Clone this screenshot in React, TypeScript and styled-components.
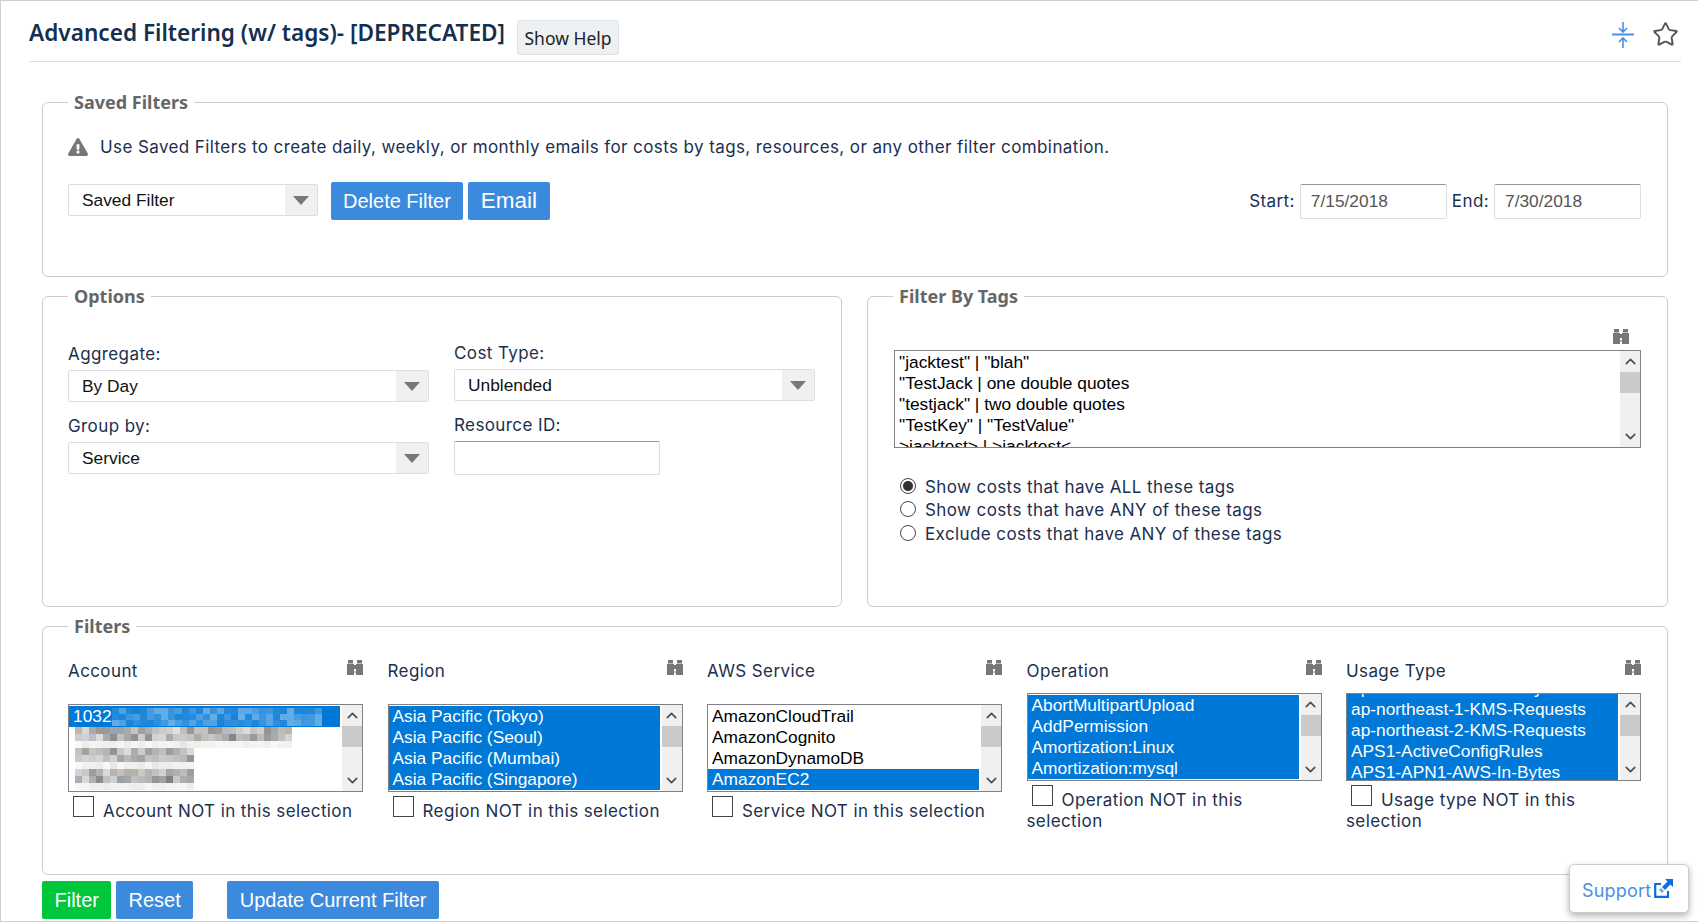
import * as React from 'react';
import styled, { createGlobalStyle } from 'styled-components';
import { FaExclamationTriangle } from 'react-icons/fa';
import { ChevronDown, ChevronUp, Star } from 'lucide-react';

const BODY_FONT = `Inter, "Noto Sans", sans-serif`;
const HEAD_FONT = `"Noto Sans", "Open Sans", sans-serif`;
const ARIAL = `"Liberation Sans", Arial, sans-serif`;

// deterministic noise for the blurred account names
const noise = (seed: number) => {
  let s = seed;
  return () => {
    s = (s * 16807) % 2147483647;
    return (s % 1000) / 1000;
  };
};

const BlurredSelected = () => {
  const rnd = noise(77);
  const cells = [];
  for (let y = 0; y < 3; y++) {
    for (let x = 0; x < 30; x++) {
      cells.push(
        <rect key={`${x}-${y}`} x={x * 7} y={y * 6} width={7} height={6} fill="#fff" opacity={0.08 + rnd() * 0.32} />
      );
    }
  }
  return (
    <svg width={210} height={18}>
      {cells}
    </svg>
  );
};

const BlurredRows = () => {
  const rnd = noise(1234);
  const greys = ['#7f7f7f', '#a5a5a0', '#b4b0a8', '#9aa0a8', '#c0bcb6', '#8c8c8c'];
  const lines = [31, 17, 17];
  const cells: React.ReactNode[] = [];
  lines.forEach((count, line) => {
    for (let row = 0; row < 3; row++) {
      for (let x = 0; x < count; x++) {
        const strength = row === 2 ? 0.08 + rnd() * 0.12 : 0.45 + rnd() * 0.55;
        cells.push(
          <rect
            key={`${line}-${row}-${x}`}
            x={x * 7}
            y={line * 21 + row * 7}
            width={7}
            height={7}
            fill={greys[Math.floor(rnd() * greys.length)]}
            opacity={strength}
          />
        );
      }
    }
  });
  return (
    <MosaicSvg width={225} height={63}>
      {cells}
    </MosaicSvg>
  );
};

const CompressIcon = () => (
  <svg width={22} height={28} viewBox="0 0 22 28" fill="none" stroke="#4a90e2" strokeWidth={1.6}>
    <path d="M11 1v10M7 7l4 4 4-4" />
    <path d="M0 13.5h22" strokeWidth={2} />
    <path d="M11 27V17M7 21l4-4 4 4" />
  </svg>
);

const BinocularsIcon = () => (
  <svg width={16} height={15} viewBox="0 0 16 15" fill="#777">
    <path d="M1 0h5v3.5H1zM10 0h5v3.5h-5zM0 4h7v11H0zM9 4h7v11H9z" />
    <path d="M7 5h2v4H7z" />
    <path d="M7 11h2v2H7z" opacity={0.5} />
  </svg>
);

const ExternalIcon = () => (
  <svg width={20} height={20} viewBox="0 0 20 20" fill="none">
    <path d="M7 6H1.2v12.8H14V13" stroke="#0f6be0" strokeWidth={2.2} />
    <path d="M11 1h8v8l-2.6-2.6-5.4 5.6-3-3 5.5-5.4z" fill="#0f6be0" />
    <path d="M5 12l2-2 3 3-2 2z" fill="#0f6be0" opacity={0.6} />
  </svg>
);

const Select = ({ value }: { value: string }) => (
  <SelectBox>
    <SelectValue>{value}</SelectValue>
    <SelectArrow>
      <Triangle />
    </SelectArrow>
  </SelectBox>
);

type ListProps = {
  rows?: string[];
  selected?: number[];
  scrolled?: boolean;
  tall?: boolean;
  children?: React.ReactNode;
};

const ListBox = ({ rows = [], selected = [], scrolled, tall, children }: ListProps) => (
  <ListFrame $tall={tall}>
    <ListRows $scrolled={scrolled}>
      {children}
      {rows.map((row, i) => (
        <ListRow key={row} $selected={selected.includes(i)}>
          {row}
        </ListRow>
      ))}
    </ListRows>
    <ScrollBar>
      <ScrollButton>
        <ChevronUp size={17} strokeWidth={2.4} />
      </ScrollButton>
      <ScrollThumb />
      <ScrollRest />
      <ScrollButton>
        <ChevronDown size={17} strokeWidth={2.4} />
      </ScrollButton>
    </ScrollBar>
  </ListFrame>
);

type ColumnProps = {
  title: string;
  notLabel: string;
  short?: boolean;
  children: React.ReactNode;
};

const FilterColumn = ({ title, notLabel, short, children }: ColumnProps) => (
  <div>
    <ColumnHead $short={short}>
      <FieldLabel>{title}</FieldLabel>
      <BinocularsIcon />
    </ColumnHead>
    {children}
    <NotLabel>
      <CheckBox />
      {notLabel}
    </NotLabel>
  </div>
);

export default function App() {
  return (
    <>
      <GlobalStyle />
      <Page>
        <Header>
          <Title>Advanced Filtering (w/ tags)- [DEPRECATED]</Title>
          <HelpButton>Show Help</HelpButton>
          <HeaderIcons>
            <CompressIcon />
            <Star size={27} color="#555" strokeWidth={1.7} />
          </HeaderIcons>
        </Header>

        <Content>
          <Panel $height={187}>
            <PanelLegend>Saved Filters</PanelLegend>
            <Note>
              <FaExclamationTriangle size={20} color="#777" />
              <span>Use Saved Filters to create daily, weekly, or monthly emails for costs by tags, resources, or any other filter combination.</span>
            </Note>
            <SavedRow>
              <SavedSelect>
                <Select value="Saved Filter" />
              </SavedSelect>
              <BlueButton>Delete Filter</BlueButton>
              <EmailButton>Email</EmailButton>
              <DateGroup>
                <FieldLabel>Start:</FieldLabel>
                <DateInput>7/15/2018</DateInput>
                <FieldLabel>End:</FieldLabel>
                <DateInput>7/30/2018</DateInput>
              </DateGroup>
            </SavedRow>
          </Panel>

          <PanelRow>
            <Panel $height={323}>
              <PanelLegend>Options</PanelLegend>
              <OptionsGrid>
                <OptionsColumn $top={35}>
                  <OptionLabel>Aggregate:</OptionLabel>
                  <Select value="By Day" />
                  <OptionLabel $next>Group by:</OptionLabel>
                  <Select value="Service" />
                </OptionsColumn>
                <OptionsColumn $top={34}>
                  <OptionLabel>Cost Type:</OptionLabel>
                  <Select value="Unblended" />
                  <OptionLabel $next>Resource ID:</OptionLabel>
                  <ResourceInput />
                </OptionsColumn>
              </OptionsGrid>
            </Panel>

            <Panel $height={323}>
              <PanelLegend>Filter By Tags</PanelLegend>
              <TagsHead>
                <BinocularsIcon />
              </TagsHead>
              <TagsList>
                <ListBox
                  tall
                  rows={[
                    '"jacktest" | "blah"',
                    '"TestJack | one double quotes',
                    '"testjack" | two double quotes',
                    '"TestKey" | "TestValue"',
                    '>jacktest> | >jacktest<',
                  ]}
                />
              </TagsList>
              <RadioGroup>
                <RadioRow>
                  <Radio $checked />
                  Show costs that have ALL these tags
                </RadioRow>
                <RadioRow>
                  <Radio />
                  Show costs that have ANY of these tags
                </RadioRow>
                <RadioRow>
                  <Radio />
                  Exclude costs that have ANY of these tags
                </RadioRow>
              </RadioGroup>
            </Panel>
          </PanelRow>

          <Panel $height={261}>
            <PanelLegend>Filters</PanelLegend>
            <FilterGrid>
              <FilterColumn title="Account" notLabel="Account NOT in this selection">
                <ListBox>
                  <ListRow $selected>
                    1032
                    <BlurredSelected />
                  </ListRow>
                  <BlurredRows />
                </ListBox>
              </FilterColumn>
              <FilterColumn title="Region" notLabel="Region NOT in this selection">
                <ListBox
                  rows={['Asia Pacific (Tokyo)', 'Asia Pacific (Seoul)', 'Asia Pacific (Mumbai)', 'Asia Pacific (Singapore)']}
                  selected={[0, 1, 2, 3]}
                />
              </FilterColumn>
              <FilterColumn title="AWS Service" notLabel="Service NOT in this selection">
                <ListBox rows={['AmazonCloudTrail', 'AmazonCognito', 'AmazonDynamoDB', 'AmazonEC2']} selected={[3]} />
              </FilterColumn>
              <FilterColumn short title="Operation" notLabel="Operation NOT in this selection">
                <ListBox
                  rows={['AbortMultipartUpload', 'AddPermission', 'Amortization:Linux', 'Amortization:mysql']}
                  selected={[0, 1, 2, 3]}
                />
              </FilterColumn>
              <FilterColumn short title="Usage Type" notLabel="Usage type NOT in this selection">
                <ListBox
                  scrolled
                  rows={[
                    'ap-northeast-1-KMS-Key',
                    'ap-northeast-1-KMS-Requests',
                    'ap-northeast-2-KMS-Requests',
                    'APS1-ActiveConfigRules',
                    'APS1-APN1-AWS-In-Bytes',
                  ]}
                  selected={[0, 1, 2, 3, 4]}
                />
              </FilterColumn>
            </FilterGrid>
          </Panel>

          <Actions>
            <GreenButton>Filter</GreenButton>
            <BlueButton>Reset</BlueButton>
            <UpdateButton>Update Current Filter</UpdateButton>
          </Actions>
        </Content>

        <Support>
          <SupportText>Support</SupportText>
          <ExternalIcon />
        </Support>
      </Page>
    </>
  );
}

const GlobalStyle = createGlobalStyle`
  * {
    box-sizing: border-box;
  }

  html, body {
    margin: 0;
    padding: 0;
    background: #fff;
    font-family: ${BODY_FONT};
    color: #1b2f4e;
  }
`;

const Page = styled.div`
  position: relative;
  width: 1698px;
  height: 922px;
  padding-left: 1px;
  overflow: hidden;
  border-top: 1px solid #cfcfcf;
  border-bottom: 1px solid #cfcfcf;
  border-left: 1px solid #cfcfcf;
`;

const Header = styled.header`
  display: flex;
  align-items: center;
  height: 61px;
  margin: 0 17px 0 27px;
  border-bottom: 1px solid #ddd;
`;

const Title = styled.h1`
  margin: 0 12px -3px 0;
  font-family: ${HEAD_FONT};
  font-size: 22.6px;
  font-weight: 600;
  color: #14304f;
`;

const HelpButton = styled.button`
  height: 35px;
  width: 102px;
  margin-top: 13px;
  padding: 0;
  background: #eef1f3;
  border: 1px solid #dfe3e6;
  border-radius: 3px;
  font-family: ${HEAD_FONT};
  font-size: 17.5px;
  color: #222;
`;

const HeaderIcons = styled.div`
  display: flex;
  align-items: center;
  gap: 18px;
  margin-left: auto;
  padding-right: 2px;
  margin-top: 7px;
`;

const Content = styled.main`
  width: 1626px;
  margin: 28px 0 0 40px;
`;

const Panel = styled.fieldset<{ $height: number }>`
  min-width: 0;
  height: ${(p) => p.$height}px;
  margin: 0 0 7px;
  padding: 0 25px;
  border: 1px solid #ccc;
  border-radius: 6px;
`;

const PanelLegend = styled.legend`
  margin-left: 0;
  padding: 0 6px;
  font-family: ${HEAD_FONT};
  font-size: 18px;
  font-weight: 700;
  line-height: 24px;
  color: #666;
`;

const PanelRow = styled.div`
  display: grid;
  grid-template-columns: 800px 801px;
  column-gap: 25px;
`;

const Note = styled.div`
  display: flex;
  align-items: center;
  gap: 12px;
  height: 22px;
  margin-top: 22px;
  font-size: 17px;
  letter-spacing: 0.4px;
`;

const SavedRow = styled.div`
  display: flex;
  align-items: center;
  gap: 5px;
  margin-top: 24px;
`;

const SavedSelect = styled.div`
  width: 250px;
  margin: 0 8px 2px 0;
`;

const BlueButton = styled.button`
  height: 38px;
  padding: 0 12px;
  background: #3b8ade;
  border: none;
  border-radius: 2px;
  font-family: ${ARIAL};
  font-size: 20px;
  color: #fff;
`;

const EmailButton = styled(BlueButton)`
  padding: 0 13px;
  font-size: 22.5px;
`;

const GreenButton = styled(BlueButton)`
  padding: 0 12.5px;
  background: #00c73c;
`;

const UpdateButton = styled(BlueButton)`
  margin-left: 29px;
  padding: 0 13px;
`;

const DateGroup = styled.div`
  display: flex;
  align-items: center;
  gap: 5px;
  margin: 0 1px 0 auto;
`;

const DateInput = styled.div`
  width: 147px;
  height: 35px;
  padding-left: 10px;
  border: 1px solid #ddd;
  border-top-color: #999;
  border-radius: 2px;
  font-family: ${ARIAL};
  font-size: 17.33px;
  line-height: 33px;
  color: #555;
`;

const FieldLabel = styled.span`
  font-size: 17px;
  line-height: 22px;
  letter-spacing: 0.4px;
`;

const SelectBox = styled.div`
  display: flex;
  width: 100%;
  height: 32px;
  border: 1px solid #ddd;
  border-radius: 2px;
  background: #fff;
`;

const SelectValue = styled.div`
  flex: 1;
  padding-left: 13px;
  font-family: ${ARIAL};
  font-size: 17.33px;
  line-height: 30px;
  color: #111;
`;

const SelectArrow = styled.div`
  display: flex;
  align-items: center;
  justify-content: center;
  width: 32px;
  background: #eef0f2;
`;

const Triangle = styled.span`
  width: 0;
  height: 0;
  border-left: 8px solid transparent;
  border-right: 8px solid transparent;
  border-top: 9px solid #777;
`;

const OptionsGrid = styled.div`
  display: grid;
  grid-template-columns: 361px 361px;
  column-gap: 25px;
`;

const OptionsColumn = styled.div<{ $top: number }>`
  padding-top: ${(p) => p.$top}px;
`;

const OptionLabel = styled.div<{ $next?: boolean }>`
  margin: ${(p) => (p.$next ? '13px' : '0')} 0 5px;
  font-size: 17px;
  line-height: 22px;
  letter-spacing: 0.4px;
`;

const ResourceInput = styled.div`
  width: 206px;
  height: 34px;
  border: 1px solid #ddd;
  border-top-color: #999;
  border-radius: 2px;
`;

const TagsHead = styled.div`
  display: flex;
  justify-content: flex-end;
  height: 42px;
  padding: 21px 13px 0 0;
`;

const TagsList = styled.div`
  padding: 0 1px;
`;

const RadioGroup = styled.div`
  margin-top: 27px;
  padding-left: 7px;
`;

const RadioRow = styled.div`
  display: flex;
  align-items: center;
  gap: 9px;
  height: 23.5px;
  font-size: 17px;
  letter-spacing: 0.4px;
`;

const Radio = styled.span<{ $checked?: boolean }>`
  position: relative;
  top: -1px;
  width: 16px;
  height: 16px;
  border: 1px solid #444;
  border-radius: 50%;
  background: ${(p) => (p.$checked ? 'radial-gradient(circle, #333 0 4.5px, #fff 5.5px)' : '#fff')};
`;

const FilterGrid = styled.div`
  display: grid;
  grid-template-columns: repeat(5, 295px);
  column-gap: 24.5px;
`;

const ColumnHead = styled.div<{ $short?: boolean }>`
  display: flex;
  justify-content: space-between;
  align-items: flex-start;
  height: ${(p) => (p.$short ? '55px' : '66px')};
  padding-top: 22px;
`;

const ListFrame = styled.div<{ $tall?: boolean }>`
  display: flex;
  height: ${(p) => (p.$tall ? '98px' : '88px')};
  border: 1.5px solid #808086;
  overflow: hidden;
  background: #fff;
`;

const ListRows = styled.div<{ $scrolled?: boolean }>`
  flex: 1;
  min-width: 0;
  margin-top: ${(p) => (p.$scrolled ? '-16px' : '1px')};
  margin-right: 2px;
`;

const ListRow = styled.div<{ $selected?: boolean }>`
  display: flex;
  align-items: center;
  height: 21px;
  padding-left: 4px;
  font-family: ${ARIAL};
  font-size: 17.33px;
  line-height: 21px;
  white-space: nowrap;
  color: ${(p) => (p.$selected ? '#fff' : '#000')};
  background: ${(p) => (p.$selected ? '#0078d7' : 'transparent')};
`;

const MosaicSvg = styled.svg`
  display: block;
  margin-left: 6px;
`;

const ScrollBar = styled.div`
  display: flex;
  flex-direction: column;
  flex: 0 0 20px;
  background: #f0f0f0;
`;

const ScrollButton = styled.div`
  display: flex;
  align-items: center;
  justify-content: center;
  height: 21px;
  color: #505050;
`;

const ScrollThumb = styled.div`
  height: 21px;
  background: #cacaca;
`;

const ScrollRest = styled.div`
  flex: 1;
`;

const NotLabel = styled.div`
  font-size: 17px;
  line-height: 21px;
  letter-spacing: 0.4px;
`;

const CheckBox = styled.span`
  display: inline-block;
  width: 21px;
  height: 21px;
  margin: 4px 9px 0 5px;
  border: 1px solid #444;
`;

const Actions = styled.div`
  display: flex;
  gap: 5px;
  margin-top: -1px;
`;

const Support = styled.div`
  position: absolute;
  right: 9px;
  bottom: 8px;
  display: flex;
  align-items: center;
  gap: 3px;
  width: 120px;
  height: 49px;
  padding-left: 12px;
  background: #fff;
  border: 1px solid #ccc;
  border-radius: 5px;
  box-shadow: 0 3px 7px rgba(0, 0, 0, 0.3);
  font-size: 18px;
  letter-spacing: 0.2px;
  color: #4a90e2;

  svg {
    margin-top: -2px;
  }
`;

const SupportText = styled.span`
  margin-top: 3px;
`;
